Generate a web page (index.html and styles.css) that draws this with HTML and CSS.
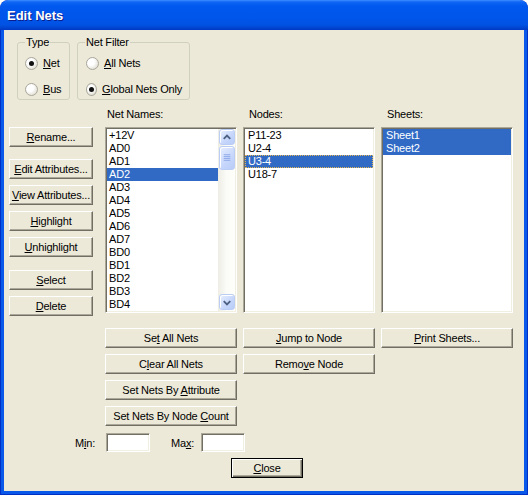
FILE: index.html
```html
<!DOCTYPE html>
<html lang="en">
<head>
	<meta charset="UTF-8">
	<title>Edit Nets</title>
	<link rel="stylesheet" href="styles.css">
</head>
<body>
	<div class="window">
		<div class="titlebar">Edit Nets</div>
		<div class="frame">
			<div class="filters">
				<fieldset class="group group-type">
					<legend>Type</legend>
					<div class="opts">
						<label class="radio"><span class="dot checked"></span><span><u>N</u>et</span></label>
						<label class="radio"><span class="dot"></span><span><u>B</u>us</span></label>
					</div>
				</fieldset>
				<fieldset class="group group-filter">
					<legend>Net Filter</legend>
					<div class="opts">
						<label class="radio"><span class="dot"></span><span><u>A</u>ll Nets</span></label>
						<label class="radio"><span class="dot checked"></span><span><u>G</u>lobal Nets Only</span></label>
					</div>
				</fieldset>
			</div>

			<div class="main">
				<div class="tools">
					<button class="btn"><u>R</u>ename...</button>
					<button class="btn sep"><u>E</u>dit Attributes...</button>
					<button class="btn"><u>V</u>iew Attributes...</button>
					<button class="btn"><u>H</u>ighlight</button>
					<button class="btn"><u>U</u>nhighlight</button>
					<button class="btn sep2"><u>S</u>elect</button>
					<button class="btn"><u>D</u>elete</button>
				</div>
				<div class="col">
					<div class="label label-first">Net Names:</div>
					<div class="listbox">
						<div class="items">
							<div class="item">+12V</div>
							<div class="item">AD0</div>
							<div class="item">AD1</div>
							<div class="item sel">AD2</div>
							<div class="item">AD3</div>
							<div class="item">AD4</div>
							<div class="item">AD5</div>
							<div class="item">AD6</div>
							<div class="item">AD7</div>
							<div class="item">BD0</div>
							<div class="item">BD1</div>
							<div class="item">BD2</div>
							<div class="item">BD3</div>
							<div class="item">BD4</div>
						</div>
						<div class="scrollbar">
							<div class="sb-btn">
								<svg width="15" height="15" viewBox="0 0 15 15"><polyline points="4,9 7.5,5.5 11,9" fill="none" stroke="#4D6185" stroke-width="2"/></svg>
							</div>
							<div class="sb-thumb">
								<svg width="15" height="22" viewBox="0 0 15 22">
									<g stroke="#8CA8E8" stroke-width="1">
										<line x1="4" y1="7.5" x2="11" y2="7.5"/>
										<line x1="4" y1="9.5" x2="11" y2="9.5"/>
										<line x1="4" y1="11.5" x2="11" y2="11.5"/>
										<line x1="4" y1="13.5" x2="11" y2="13.5"/>
									</g>
								</svg>
							</div>
							<div class="sb-track"></div>
							<div class="sb-btn">
								<svg width="15" height="15" viewBox="0 0 15 15"><polyline points="4,6 7.5,9.5 11,6" fill="none" stroke="#4D6185" stroke-width="2"/></svg>
							</div>
						</div>
					</div>
				</div>
				<div class="col">
					<div class="label">Nodes:</div>
					<div class="listbox list-wide">
						<div class="items">
							<div class="item">P11-23</div>
							<div class="item">U2-4</div>
							<div class="item sel focus">U3-4</div>
							<div class="item">U18-7</div>
						</div>
					</div>
				</div>
				<div class="col">
					<div class="label">Sheets:</div>
					<div class="listbox list-wide">
						<div class="items">
							<div class="item sel">Sheet1</div>
							<div class="item sel">Sheet2</div>
						</div>
					</div>
				</div>
			</div>

			<div class="actions">
				<button class="btn c2">Se<u>t</u> All Nets</button>
				<button class="btn c3"><u>J</u>ump to Node</button>
				<button class="btn c4"><u>P</u>rint Sheets...</button>
				<button class="btn c2">C<u>l</u>ear All Nets</button>
				<button class="btn c3">Remo<u>v</u>e Node</button>
				<button class="btn c2">Set Nets By <u>A</u>ttribute</button>
				<button class="btn c2">Set Nets By Node <u>C</u>ount</button>
			</div>

			<div class="range">
				<span class="range-label">M<u>i</u>n:</span>
				<span class="field"></span>
				<span class="range-label range-max">Ma<u>x</u>:</span>
				<span class="field"></span>
			</div>

			<div class="close-row">
				<button class="btn btn-default"><u>C</u>lose</button>
			</div>
		</div>
	</div>
</body>
</html>
```

FILE: styles.css
```css
*{
	margin: 0;
	padding: 0;
	box-sizing: border-box;
}
body{
	background: #fff;
	font-family: "Liberation Sans", Arial, sans-serif;
	font-size: 11px;
	letter-spacing: -0.2px;
	color: #000;
}
u{
	text-decoration: underline;
	text-underline-offset: 1px;
}
.window{
	display: flex;
	flex-direction: column;
	width: 528px;
	height: 495px;
	padding: 0 1px 1px;
	background: #0031c4;
	border-radius: 8px 8px 0 0;
	overflow: hidden;
}
.titlebar{
	flex: none;
	height: 30px;
	margin: 0 -1px;
	padding-left: 7px;
	border-radius: 8px 8px 0 0;
	background: linear-gradient(#3d8cff 0, #0f66f5 2px, #0058ee 6px, #0055ea 18px, #0052e2 25px, #0044cf 28px, #0038c4 30px);
	color: #fff;
	font: bold 13px "Liberation Sans", Arial, sans-serif;
	letter-spacing: 0;
	line-height: 32px;
	text-shadow: 1px 1px #0a1d8a;
}
.frame{
	flex: 1;
	display: flex;
	flex-direction: column;
	padding: 6px 11px 0 5px;
	border: solid #0a58ea;
	border-width: 0 3px 3px;
	background: #ece9d8;
}

/* group boxes */
.filters{
	display: flex;
	gap: 7px;
	margin-left: 8px;
}
.group{
	border: 1px solid #d0d0bf;
	border-radius: 3px;
	padding: 8px 7px 3px;
	min-width: 0;
}
.group legend{
	padding: 0 1px;
	line-height: 13px;
}
.group-type{
	width: 53px;
}
.group-filter{
	width: 113px;
}
.group-filter .opts{
	margin-left: 1px;
}
.opts{
	display: flex;
	flex-direction: column;
	gap: 13px;
}
.radio{
	display: flex;
	align-items: center;
	gap: 5px;
	height: 13px;
	line-height: 13px;
	white-space: nowrap;
}
.dot{
	display: flex;
	align-items: center;
	justify-content: center;
	width: 13px;
	height: 13px;
	border: 1px solid #a9a79c;
	border-radius: 50%;
	background: radial-gradient(circle at 35% 35%, #fff 35%, #e4e2d8 75%, #cfcdc2 100%);
}
.dot.checked::after{
	content: "";
	width: 5px;
	height: 5px;
	border-radius: 50%;
	background: #111;
}

/* lists */
.main{
	display: grid;
	grid-template-columns: 90px repeat(3, 132px);
	column-gap: 6px;
	align-items: start;
	margin-top: 8px;
}
.tools{
	display: flex;
	flex-direction: column;
	gap: 6px;
	padding-top: 19px;
}
.tools .btn{
	width: 84px;
}
.tools .sep{
	margin-top: 6px;
}
.tools .sep2{
	margin-top: 7px;
}
.label{
	height: 13px;
	margin-bottom: 6px;
	padding-left: 6px;
	line-height: 13px;
}
.label-first{
	padding-left: 2px;
}
.listbox{
	display: flex;
	height: 186px;
	padding: 1px;
	background: #fff;
	border: 1px solid;
	border-color: #aca899 #fff #fff #aca899;
	box-shadow: inset 1px 1px #716f64, inset -1px -1px #f1efe2;
	overflow: hidden;
}
.items{
	flex: 1;
	min-width: 0;
}
.item{
	height: 13px;
	padding-left: 2px;
	line-height: 13px;
	white-space: nowrap;
}
.list-wide .item{
	padding-left: 3px;
}
.item.sel{
	background: #316ac5;
	color: #fff;
}
.item.focus{
	outline: 1px dotted #e3b655;
	outline-offset: -1px;
}
.scrollbar{
	display: flex;
	flex-direction: column;
	width: 17px;
	padding: 0 0 0 1px;
	background: linear-gradient(to right, #eeede5, #fbfbf8 50%, #fefefb);
}
.sb-btn,
.sb-thumb{
	display: flex;
	align-items: center;
	justify-content: center;
	border: 1px solid #bccdf5;
	border-radius: 3px;
	background: linear-gradient(135deg, #e6eefe, #c6d6fb 60%, #b9cdf8);
	box-shadow: inset 1px 1px #fff;
}
.sb-btn{
	height: 16px;
	margin: 0 0 1px;
}
.sb-thumb{
	height: 24px;
}
.sb-track{
	flex: 1;
}

/* buttons */
.btn{
	display: block;
	height: 20px;
	width: 100%;
	background: #ece9d8;
	border: 1px solid;
	border-color: #fff #716f64 #716f64 #fff;
	box-shadow: inset -1px -1px #aca899;
	font: inherit;
	letter-spacing: inherit;
	color: #000;
	text-align: center;
	line-height: 17px;
	white-space: nowrap;
}
.btn-default{
	width: 72px;
	border-color: #000;
	box-shadow: inset 1px 1px #fff, inset -1px -1px #716f64, inset -2px -2px #aca899;
}
.actions{
	display: grid;
	grid-template-columns: 90px repeat(3, 132px);
	column-gap: 6px;
	row-gap: 6px;
	margin-top: 12px;
}
.c2{
	grid-column: 2;
}
.c3{
	grid-column: 3;
}
.c4{
	grid-column: 4;
}
.range{
	display: flex;
	align-items: center;
	height: 19px;
	margin-top: 7px;
	padding-left: 66px;
}
.range-label{
	width: 31px;
}
.range-max{
	width: 30px;
	margin-left: 21px;
}
.field{
	display: block;
	width: 44px;
	height: 19px;
	background: #fff;
	border: 1px solid;
	border-color: #aca899 #fff #fff #aca899;
	box-shadow: inset 1px 1px #716f64, inset -1px -1px #f1efe2;
}
.close-row{
	margin-top: 6px;
	padding-left: 222px;
}
```
